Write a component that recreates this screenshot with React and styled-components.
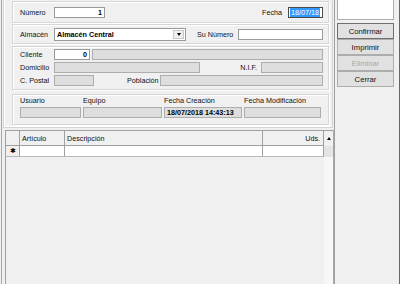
import React from 'react';
import styled, { createGlobalStyle } from 'styled-components';

const Global = createGlobalStyle`
  html, body { margin: 0; padding: 0; background: #f0f0f0; }
  body { font-family: "Liberation Sans", Arial, sans-serif; }
  * { box-sizing: border-box; }
`;

const Window = styled.div`
  width: 400px;
  height: 284px;
  display: flex;
  background: #f0f0f0;
  border-right: 1px solid #2b7a9a;
  overflow: hidden;
  font-family: "Liberation Sans", Arial, sans-serif;
  font-size: 7.2px;
  color: #000;
`;

const LeftArea = styled.div`
  width: 334px;
  flex: none;
  margin-left: 1px;
  display: flex;
  flex-direction: column;
  border-left: 1px solid #a8a8a8;
  border-right: 1px solid #a0a0a0;
`;

const TopPanel = styled.div`
  height: 128px;
  width: 330px;
  margin-left: 1px;
  flex: none;
  padding: 1px 3px 0 8px;
  border: 1px solid #d4d4d4;
  border-top: none;
  box-shadow: inset 1px 0 0 #fff, inset 0 -1px 0 #fff;
  display: flex;
  flex-direction: column;
`;

const Group = styled.div`
  flex: none;
  height: ${p => p.$h}px;
  margin-top: ${p => p.$mt}px;
  padding: ${p => p.$pt || 0}px 5px 0 7px;
  border: 1px solid #d6d6d6;
  box-shadow: inset 1px 1px 0 #fff, 1px 1px 0 #fff;
  display: flex;
  flex-direction: column;
  justify-content: ${p => (p.$center ? 'center' : 'flex-start')};
  gap: ${p => p.$gap || 0}px;
`;

const Row = styled.div`
  display: flex;
  align-items: center;
  height: ${p => p.$h || 11}px;
`;

const Label = styled.span`
  flex: none;
  width: ${p => (p.$w ? `${p.$w}px` : 'auto')};
  margin-left: ${p => p.$ml || 0}px;
  margin-right: ${p => p.$mr || 0}px;
  white-space: nowrap;
  color: #111;
`;

const Spacer = styled.div`
  flex: 1;
`;

const Input = styled.div`
  flex: ${p => (p.$w ? 'none' : '1')};
  width: ${p => (p.$w ? `${p.$w}px` : 'auto')};
  margin-left: ${p => p.$ml || 0}px;
  height: 11px;
  background: ${p => (p.$gray ? '#dedede' : '#fff')};
  border: 1px solid ${p => (p.$dark ? '#4a4a4a' : p.$gray ? '#adadad' : '#9a9a9a')};
  display: flex;
  align-items: center;
  justify-content: ${p => (p.$right ? 'flex-end' : 'flex-start')};
  padding: 0 2px;
  font-weight: ${p => (p.$bold ? 700 : 400)};
  color: #000;
  white-space: nowrap;
  overflow: hidden;
`;

const Selected = styled.span`
  background: #3399ff;
  color: #fff;
  height: 9px;
  line-height: 9px;
  padding: 0 1px;
  margin-left: -1px;
`;

const Select = styled.div`
  flex: none;
  width: 132px;
  height: 13px;
  background: #fff;
  border: 1px solid #9a9a9a;
  display: flex;
  align-items: stretch;
`;

const SelectText = styled.div`
  flex: 1;
  display: flex;
  align-items: center;
  padding-left: 2px;
  font-weight: 700;
  color: #000;
`;

const SelectButton = styled.div`
  width: 11px;
  margin: 1px;
  background: #f0f0f0;
  border: 1px solid #c8c8c8;
  display: flex;
  align-items: center;
  justify-content: center;
`;

const Triangle = styled.span`
  width: 0;
  height: 0;
  border-left: 2.5px solid transparent;
  border-right: 2.5px solid transparent;
  ${p => (p.$up ? 'border-bottom: 3px solid #000;' : 'border-top: 3px solid #000;')}
`;

const InfoGrid = styled.div`
  display: grid;
  grid-template-columns: 61px 79px 78px 77px;
  grid-template-rows: 9px 11px;
  column-gap: 2px;
  row-gap: 2px;
  align-items: center;
`;

const DataGrid = styled.div`
  flex: 1;
  margin: 2px 0 0 3px;
  border: 1px solid #a0a0a0;
  border-bottom: none;
  border-right: 1px solid #a8a8a8;
  display: flex;
  background: #f0f0f0;
  min-height: 0;
`;

const Table = styled.div`
  flex: 1;
  display: grid;
  grid-template-columns: 14px 45px 198px 61px;
  grid-template-rows: 15px 11px;
  align-content: start;
`;

const HeadCell = styled.div`
  border-right: 1px solid #a0a0a0;
  border-bottom: 1px solid #a0a0a0;
  background: #f0f0f0;
  display: flex;
  align-items: center;
  justify-content: ${p => (p.$right ? 'flex-end' : 'flex-start')};
  padding: 1px 3px 0 2px;
  color: #111;
  white-space: nowrap;
`;

const Cell = styled.div`
  border-right: 1px solid #a0a0a0;
  border-bottom: 1px solid #b8b8b8;
  background: ${p => (p.$sel ? '#f0f0f0' : '#fff')};
  display: flex;
  align-items: center;
  justify-content: center;
  font-size: 7px;
  color: #000;
`;

const ScrollBar = styled.div`
  width: 9px;
  flex: none;
  display: flex;
  flex-direction: column;
  background: #f7f7f7;
`;

const ScrollArrow = styled.div`
  height: 15px;
  background: #f0f0f0;
  display: flex;
  align-items: center;
  justify-content: center;
`;

const ScrollThumb = styled.div`
  height: 11px;
  background: #e4e4e4;
`;

const RightArea = styled.div`
  flex: 1;
  padding-left: 2px;
  display: flex;
  flex-direction: column;
`;

const InfoBox = styled.div`
  width: 57px;
  height: 20px;
  background: #fff;
  border: 1px solid #adadad;
  border-top: none;
`;

const ButtonStack = styled.div`
  margin-top: 3px;
  display: flex;
  flex-direction: column;
`;

const Button = styled.div`
  width: 57px;
  height: 16px;
  background: #e1e1e1;
  border: 1px solid ${p => (p.$default ? '#707070' : '#adadad')};
  display: flex;
  align-items: center;
  justify-content: center;
  color: ${p => (p.$disabled ? '#a8a8a8' : '#111')};
  font-size: 7.7px;
`;

export default function App() {
  return (
    <>
      <Global />
      <Window>
        <LeftArea>
          <TopPanel>
            <Group $h={22} $mt={0} $center>
              <Row>
                <Label $w={34}>Número</Label>
                <Input $w={51} $right $bold>1</Input>
                <Spacer />
                <Label $mr={6}>Fecha</Label>
                <Input $w={35} $dark>
                  <Selected>18/07/18</Selected>
                </Input>
              </Row>
            </Group>
            <Group $h={20} $mt={1} $center>
              <Row $h={13}>
                <Label $w={34}>Almacén</Label>
                <Select>
                  <SelectText>Almacén Central</SelectText>
                  <SelectButton>
                    <Triangle />
                  </SelectButton>
                </Select>
                <Label $w={41} $ml={11}>Su Número</Label>
                <Input />
              </Row>
            </Group>
            <Group $h={44} $mt={2} $pt={2} $gap={2}>
              <Row>
                <Label $w={34}>Cliente</Label>
                <Input $w={36} $right $bold>0</Input>
                <Input $gray $ml={2} />
              </Row>
              <Row>
                <Label $w={34}>Domicilio</Label>
                <Input $w={146} $gray />
                <Spacer />
                <Label $mr={4}>N.I.F.</Label>
                <Input $w={62} $gray />
              </Row>
              <Row>
                <Label $w={34}>C. Postal</Label>
                <Input $w={40} $gray />
                <Label $w={33} $ml={33}>Población</Label>
                <Input $gray />
              </Row>
            </Group>
            <Group $h={31} $mt={4} $pt={1}>
              <InfoGrid>
                <Label>Usuario</Label>
                <Label>Equipo</Label>
                <Label>Fecha Creación</Label>
                <Label>Fecha Modificación</Label>
                <Input $gray />
                <Input $gray />
                <Input $gray $bold>18/07/2018 14:43:13</Input>
                <Input $gray />
              </InfoGrid>
            </Group>
          </TopPanel>
          <DataGrid>
            <Table>
              <HeadCell />
              <HeadCell>Artículo</HeadCell>
              <HeadCell>Descripción</HeadCell>
              <HeadCell $right>Uds.</HeadCell>
              <Cell $sel>✱</Cell>
              <Cell />
              <Cell />
              <Cell />
            </Table>
            <ScrollBar>
              <ScrollArrow>
                <Triangle $up />
              </ScrollArrow>
              <ScrollThumb />
            </ScrollBar>
          </DataGrid>
        </LeftArea>
        <RightArea>
          <InfoBox />
          <ButtonStack>
            <Button $default>Confirmar</Button>
            <Button>Imprimir</Button>
            <Button $disabled>Eliminar</Button>
            <Button>Cerrar</Button>
          </ButtonStack>
        </RightArea>
      </Window>
    </>
  );
}
